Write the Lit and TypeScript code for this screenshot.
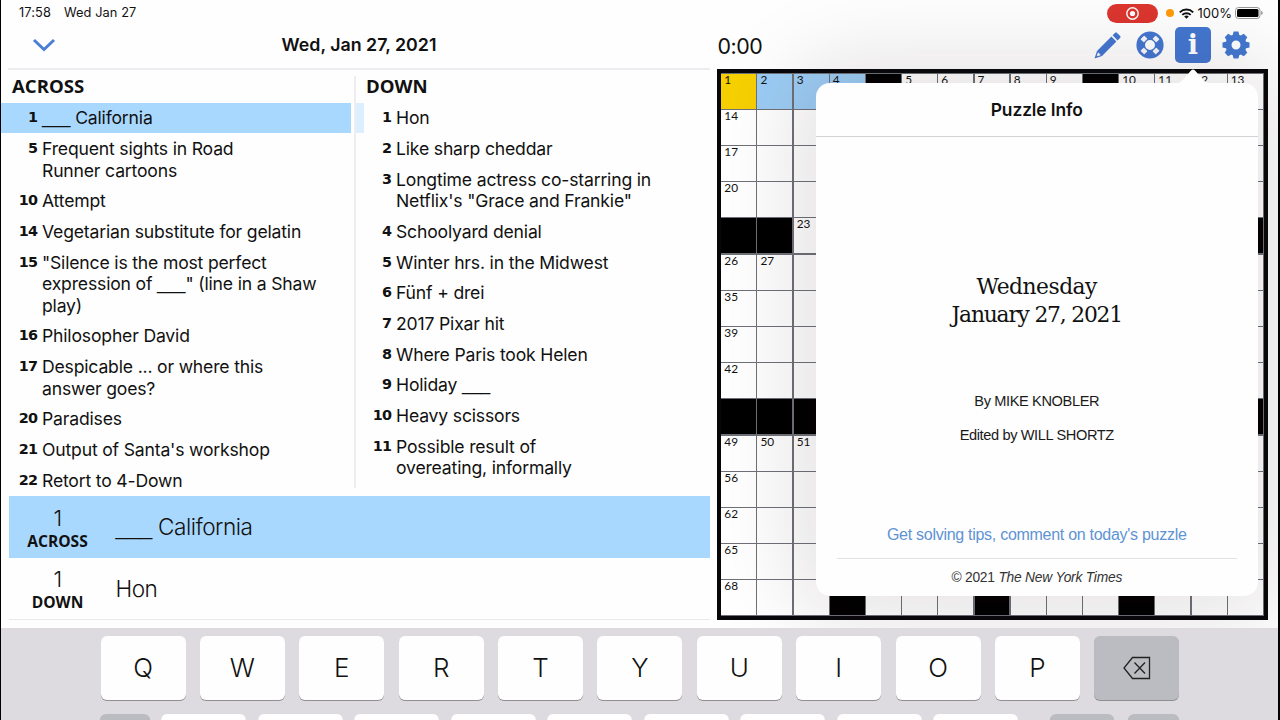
import { LitElement, html, css, svg, nothing } from 'lit';
import { customElement, property } from 'lit/decorators.js';
import { classMap } from 'lit/directives/class-map.js';

interface Clue {
  num: number;
  lines: string[];
}

const ACROSS: Clue[] = [
  { num: 1, lines: ['___ California'] },
  { num: 5, lines: ['Frequent sights in Road', 'Runner cartoons'] },
  { num: 10, lines: ['Attempt'] },
  { num: 14, lines: ['Vegetarian substitute for gelatin'] },
  { num: 15, lines: ['"Silence is the most perfect', 'expression of ___" (line in a Shaw', 'play)'] },
  { num: 16, lines: ['Philosopher David'] },
  { num: 17, lines: ['Despicable ... or where this', 'answer goes?'] },
  { num: 20, lines: ['Paradises'] },
  { num: 21, lines: ["Output of Santa's workshop"] },
  { num: 22, lines: ['Retort to 4-Down'] },
];

const DOWN: Clue[] = [
  { num: 1, lines: ['Hon'] },
  { num: 2, lines: ['Like sharp cheddar'] },
  { num: 3, lines: ['Longtime actress co-starring in', 'Netflix\'s "Grace and Frankie"'] },
  { num: 4, lines: ['Schoolyard denial'] },
  { num: 5, lines: ['Winter hrs. in the Midwest'] },
  { num: 6, lines: ['Fünf + drei'] },
  { num: 7, lines: ['2017 Pixar hit'] },
  { num: 8, lines: ['Where Paris took Helen'] },
  { num: 9, lines: ['Holiday ___'] },
  { num: 10, lines: ['Heavy scissors'] },
  { num: 11, lines: ['Possible result of', 'overeating, informally'] },
];

// '#' is a block, '.' is an unnumbered square
const ROWS = [
  '1 2 3 4 # 5 6 7 8 9 # 10 11 12 13',
  '14 . . . # . . . . . # . . . .',
  '17 . . . . . . . . . . . . . .',
  '20 . . . . . . . . . . . . . .',
  '# # 23 . . . . . . . . . . . #',
  '26 27 . . . . . . . . . . . . .',
  '35 . . . . . . . . . . . . . .',
  '39 . . . . . . . . . . . . . .',
  '42 . . . . . . . . . . . . . .',
  '# # # . . . . . . . . . . . #',
  '49 50 51 . . . . . . . . . . . .',
  '56 . . . . . . . . . . . . . .',
  '62 . . . . . . . . . . . . . .',
  '65 . . . . . . . . . . . . . .',
  '68 . . # . . . # . . . # . . .',
].map((row) => row.split(' '));

// the blank in a clue is set in a font with wider underscores
const withBlanks = (text: string) =>
  text.split(/(___)/).map((part) => (part === '___' ? html`<span class="blank">___</span>` : part));

@customElement('clue-list')
export class ClueList extends LitElement {
  @property() heading = '';
  @property({ attribute: false }) clues: Clue[] = [];
  @property({ type: Number }) selected = 0;

  static styles = css`
    :host {
      display: block;
    }

    .heading {
      margin: 0 0 2.7px 11px;
      font: 700 18.6px/28px 'Open Sans', sans-serif;
    }

    .clue {
      display: flex;
      box-sizing: border-box;
      padding: 4.55px 0;
      font-size: 17.6px;
      line-height: 21.6px;
      letter-spacing: -0.18px;
    }

    .clue.selected {
      background: #a9d8ff;
    }

    .num {
      width: 36px;
      margin-right: 5px;
      text-align: right;
      font-family: 'DejaVu Sans', sans-serif;
      font-weight: 700;
      font-size: 14.4px;
      letter-spacing: -0.9px;
    }

    .down-list {
      letter-spacing: -0.3px;
    }

    .line {
      white-space: nowrap;
    }

    .blank {
      font-family: 'Liberation Sans', sans-serif;
      font-size: 17px;
      line-height: 1;
      letter-spacing: 0;
    }
  `;

  render() {
    return html`
      <h2 class="heading">${this.heading}</h2>
      ${this.clues.map(
        (clue) => html`
          <div class=${classMap({ clue: true, selected: clue.num === this.selected })}>
            <div class="num">${clue.num}</div>
            <div>${clue.lines.map((line) => html`<div class="line">${withBlanks(line)}</div>`)}</div>
          </div>
        `
      )}
    `;
  }
}

@customElement('crossword-grid')
export class CrosswordGrid extends LitElement {
  static styles = css`
    :host {
      display: block;
      box-sizing: border-box;
      width: 551px;
      height: 551px;
      border: 4px solid #08080a;
      background: #6f7178;
    }

    .grid {
      display: grid;
      grid-template-columns: repeat(15, 1fr);
      grid-template-rows: repeat(15, 1fr);
      gap: 1.2px;
      width: 543px;
      height: 543px;
      padding: 0.8px;
      box-sizing: border-box;
    }

    .cell {
      min-width: 0;
      min-height: 0;
      padding-left: 3px;
      background: #fff;
      font: 400 11.8px/11px Lato, sans-serif;
      color: #111;
    }

    .block {
      background: #000;
    }

    .word {
      background: #9ccdf5;
    }

    .cursor {
      background: #f6d000;
    }
  `;

  render() {
    return html`
      <div class="grid">
        ${ROWS.map((row, y) =>
          row.map((cell, x) => {
            const classes = {
              cell: true,
              block: cell === '#',
              cursor: x === 0 && y === 0,
              word: y === 0 && x > 0 && x < 4,
            };
            return html`<div class=${classMap(classes)}>${/\d/.test(cell) ? cell : nothing}</div>`;
          })
        )}
      </div>
    `;
  }
}

@customElement('puzzle-info')
export class PuzzleInfo extends LitElement {
  static styles = css`
    :host {
      display: flex;
      flex-direction: column;
      align-items: center;
      box-sizing: border-box;
      width: 442.5px;
      height: 513px;
      border-radius: 14px;
      background: #fefefe;
      box-shadow: 0 0 90px 18px rgba(35, 12, 25, 0.13);
      font-family: 'Liberation Sans', sans-serif;
      text-align: center;
    }

    .arrow {
      position: absolute;
      left: 357.5px;
      top: -15px;
    }

    .title {
      width: 100%;
      box-sizing: border-box;
      height: 54px;
      border-bottom: 1px solid #d4d4d8;
      font: 600 17.4px/53px Inter, sans-serif;
      letter-spacing: -0.1px;
    }

    .date {
      margin-top: 136px;
      font: 400 21.8px/28px 'DejaVu Serif', serif;
      letter-spacing: -1.2px;
      color: #111;
    }

    .day {
      letter-spacing: -0.5px;
    }

    .byline {
      font-size: 14.6px;
      line-height: 33.5px;
      letter-spacing: -0.38px;
      color: #1a1a1a;
    }

    .byline.first {
      margin-top: 56px;
    }

    .link {
      margin-top: 72px;
      font-size: 16px;
      line-height: 22px;
      letter-spacing: -0.28px;
      color: #5e93d4;
    }

    .legal {
      width: 400px;
      margin-top: 12px;
      padding-top: 9px;
      border-top: 1px solid #e2e2e4;
      font-size: 13.8px;
      line-height: 20px;
      letter-spacing: -0.22px;
      color: #333;
    }
  `;

  render() {
    return html`
      <svg class="arrow" width="40" height="16" viewBox="0 0 40 16">
        <path d="M2 16C8 15 11 11 15 6L18 2.500Q20 0.500 22 2.500L25 6C29 11 32 15 38 16Z" fill="#fefefe" />
      </svg>
      <div class="title">Puzzle Info</div>
      <div class="date"><span class="day">Wednesday</span><br />January 27, 2021</div>
      <div class="byline first">By MIKE KNOBLER</div>
      <div class="byline">Edited by WILL SHORTZ</div>
      <div class="link">Get solving tips, comment on today's puzzle</div>
      <div class="legal">© 2021 <i>The New York Times</i></div>
    `;
  }
}

@customElement('app-root')
export class AppRoot extends LitElement {
  static styles = css`
    :host {
      display: flex;
      flex-direction: column;
      box-sizing: border-box;
      width: 1280px;
      height: 720px;
      overflow: hidden;
      border-left: 1.5px solid #000;
      border-right: 2px solid #000;
      background: #fefefe;
      color: #111;
      font-family: Inter, sans-serif;
    }

    .main {
      display: flex;
      height: 628px;
    }

    .left {
      width: 709px;
      display: flex;
      flex-direction: column;
    }

    .status {
      display: flex;
      gap: 13px;
      height: 26px;
      padding-left: 18px;
      font-size: 12.8px;
      line-height: 26px;
      letter-spacing: 0.1px;
    }

    .nav {
      display: flex;
      align-items: center;
      height: 44px;
      margin-left: 7px;
      padding: 0 0 5px 24px;
      box-sizing: border-box;
      border-bottom: 2px solid #edecf0;
    }

    .nav-title {
      flex: 1;
      padding-right: 48px;
      font-size: 17.8px;
      font-weight: 600;
      text-align: center;
    }

    .lists {
      display: flex;
      height: 426px;
      padding-top: 6px;
      box-sizing: border-box;
      overflow: hidden;
    }

    .lists clue-list {
      margin-top: -4px;
    }

    .across {
      width: 350px;
    }

    .rule {
      width: 2px;
      height: 412px;
      margin: 0 0 0 3px;
      background: #eeedf1;
    }

    .peer {
      width: 8px;
      height: 30px;
      margin-top: 27px;
      background: #dceeff;
    }

    .down {
      flex: 1;
      margin-left: -9px;
    }

    .current {
      display: flex;
      align-items: center;
      height: 62px;
      margin-left: 7.5px;
      font-size: 22.6px;
      font-weight: 350;
      letter-spacing: -0.5px;
      white-space: pre;
    }

    .current.active {
      background: #a9d8ff;
    }

    .current.last {
      box-sizing: border-box;
      border-bottom: 1px solid #e9e8ec;
    }

    .blank {
      font-family: 'Liberation Sans', sans-serif;
      font-size: 22px;
      letter-spacing: 0;
    }

    .tag {
      width: 98px;
      margin-right: 9px;
      padding-top: 4px;
      text-align: center;
      font-size: 22px;
      font-weight: 300;
      line-height: 23px;
    }

    .tag b {
      display: block;
      font: 700 15.6px/22px 'Open Sans', sans-serif;
      letter-spacing: 0;
    }

    .board {
      position: relative;
      flex: 1;
      overflow: hidden;
      background: #fefefe;
      padding-left: 6.5px;
    }

    .board-status {
      display: flex;
      justify-content: flex-end;
      align-items: center;
      height: 26px;
      padding-right: 15px;
      font-size: 13px;
    }

    .rec {
      display: block;
      margin-right: 8px;
    }

    .dot {
      width: 8px;
      height: 8px;
      margin-right: 5px;
      border-radius: 50%;
      background: #ff9a0a;
    }

    .wifi {
      margin-right: 4px;
    }

    .battery {
      margin-left: 3px;
    }

    .tools {
      display: flex;
      align-items: center;
      height: 43px;
      padding: 0 28px 5px 0;
      box-sizing: border-box;
    }

    .timer {
      flex: 1;
      padding: 2px 0 0 1px;
      font-size: 21.4px;
      letter-spacing: -0.5px;
    }

    .pencil {
      margin-right: 15px;
    }

    .buoy {
      margin-right: 11px;
    }

    .info {
      width: 36px;
      height: 36px;
      margin-right: 11px;
      border-radius: 5px;
      background: #4377d0;
      color: #fff;
      font: 700 27px/36px 'DejaVu Serif', serif;
      text-align: center;
    }

    .popover {
      position: absolute;
      left: 105.5px;
      top: 83px;
    }

    .keyboard {
      flex: 1;
      background: #dddbdf;
      padding: 8px 0 0 99.5px;
      overflow: hidden;
    }

    .row {
      display: flex;
      margin-bottom: 14px;
    }

    .row.top {
      gap: 14.4px;
    }

    .row.home {
      gap: 11.5px;
      margin-left: -1px;
    }

    .key {
      flex: none;
      display: flex;
      align-items: center;
      justify-content: center;
      width: 85px;
      height: 63.5px;
      border-radius: 6px;
      background: #fefefe;
      box-shadow: 0 1px 0 #8f8f94;
      font-size: 26px;
      font-weight: 350;
    }

    .key.gray {
      background: #bbbcc2;
    }

    .key.caps {
      width: 50px;
    }

    .key.ret {
      width: 64px;
      margin-left: 20px;
    }

    .key.end {
      width: 51px;
      margin-left: 3px;
    }
  `;

  private renderBuoy() {
    return html`
      <svg class="buoy" width="28" height="28" viewBox="-14 -14 28 28">
        <circle r="9.300" fill="none" stroke="#4377d0" stroke-width="8.600" />
        ${[45, 135, 225, 315].map(
          (a) => svg`<rect x="-2.600" y="-10.800" width="5.200" height="4.600" rx="0.600" fill="#f7f6f8" transform="rotate(${a})" />`
        )}
      </svg>
    `;
  }

  private renderGear() {
    return html`
      <svg width="28" height="28" viewBox="-14 -14 28 28">
        <circle r="7.500" fill="none" stroke="#4377d0" stroke-width="6" />
        ${[0, 45, 90, 135, 180, 225, 270, 315].map(
          (a) => svg`<path d="M-3.600 -9L-2.400 -13.500H2.400L3.600 -9Z" fill="#4377d0" transform="rotate(${a})" />`
        )}
      </svg>
    `;
  }

  private renderBoard() {
    return html`
      <div class="board">
        <div class="board-status">
          <svg class="rec" width="51" height="19" viewBox="0 0 51 19">
            <rect width="51" height="19" rx="9.500" fill="#dc352f" />
            <circle cx="25.500" cy="9.500" r="5.700" fill="none" stroke="#fff" stroke-width="1.400" />
            <circle cx="25.500" cy="9.500" r="2.600" fill="#fff" />
          </svg>
          <div class="dot"></div>
          <svg class="wifi" width="15" height="11" viewBox="0 0 15 11">
            <g fill="none" stroke="#111" stroke-width="1.900">
              <path d="M0.800 4.300A9.500 9.500 0 0 1 14.200 4.300" />
              <path d="M3.300 6.900A6 6 0 0 1 11.700 6.900" />
            </g>
            <path d="M7.500 10.800L5.200 8.500A3.300 3.300 0 0 1 9.800 8.500Z" fill="#111" />
          </svg>
          100%
          <svg class="battery" width="28" height="12" viewBox="0 0 28 12">
            <rect x="0.500" y="0.500" width="24.500" height="11" rx="3" fill="none" stroke="#98979b" />
            <rect x="2" y="2" width="21.500" height="8" rx="1.500" fill="#000" />
            <path d="M26.300 4V8Q27.600 7.300 27.600 6T26.300 4Z" fill="#77767a" />
          </svg>
        </div>
        <div class="tools">
          <div class="timer">0:00</div>
          <svg class="pencil" width="27" height="27" viewBox="0 0 27 27">
            <g fill="#4377d0">
              <path d="M18.600 3.300L21.200 0.700Q22 0 22.800 0.700L26.200 4.100Q27 5 26.200 5.800L23.600 8.400Z" />
              <path d="M17.400 4.500L22.400 9.600L8 24L0.500 26.500L3 18.900Z" />
            </g>
            <path d="M4 20.200L6.900 23L3.500 24.300L2.800 23.600Z" fill="#f7f6f8" />
          </svg>
          ${this.renderBuoy()}
          <div class="info">i</div>
          ${this.renderGear()}
        </div>
        <crossword-grid></crossword-grid>
        <puzzle-info class="popover"></puzzle-info>
      </div>
    `;
  }

  render() {
    return html`
      <div class="main">
        <div class="left">
          <div class="status"><span>17:58</span><span>Wed Jan 27</span></div>
          <div class="nav">
            <svg width="24" height="14" viewBox="0 0 24 14">
              <path d="M2 2L12 11.500L22 2" fill="none" stroke="#4a7fd6" stroke-width="3" />
            </svg>
            <div class="nav-title">Wed, Jan 27, 2021</div>
          </div>
          <div class="lists">
            <clue-list class="across" heading="ACROSS" .clues=${ACROSS} selected="1"></clue-list>
            <div class="rule"></div>
            <div class="peer"></div>
            <clue-list class="down" heading="DOWN" .clues=${DOWN}></clue-list>
          </div>
          <div class="current active"><div class="tag">1<b>ACROSS</b></div><span>${withBlanks('___ California')}</span></div>
          <div class="current last"><div class="tag">1<b>DOWN</b></div><span>Hon</span></div>
        </div>
        ${this.renderBoard()}
      </div>
      <div class="keyboard">
        <div class="row top">
          ${Array.from('QWERTYUIOP').map((key) => html`<div class="key">${key}</div>`)}
          <div class="key gray">
            <svg width="28" height="24" viewBox="0 0 28 24">
              <g fill="none" stroke="#222" stroke-width="1.300">
                <path d="M9.500 1.500H26.500V22.500H9.500L1 12Z" />
                <path d="M11.500 6.500L22 17.500M22 6.500L11.500 17.500" />
              </g>
            </svg>
          </div>
        </div>
        <div class="row home">
          <div class="key gray caps"></div>
          ${Array.from({ length: 9 }, () => html`<div class="key"></div>`)}
          <div class="key gray ret"></div>
          <div class="key gray end"></div>
        </div>
      </div>
    `;
  }
}
